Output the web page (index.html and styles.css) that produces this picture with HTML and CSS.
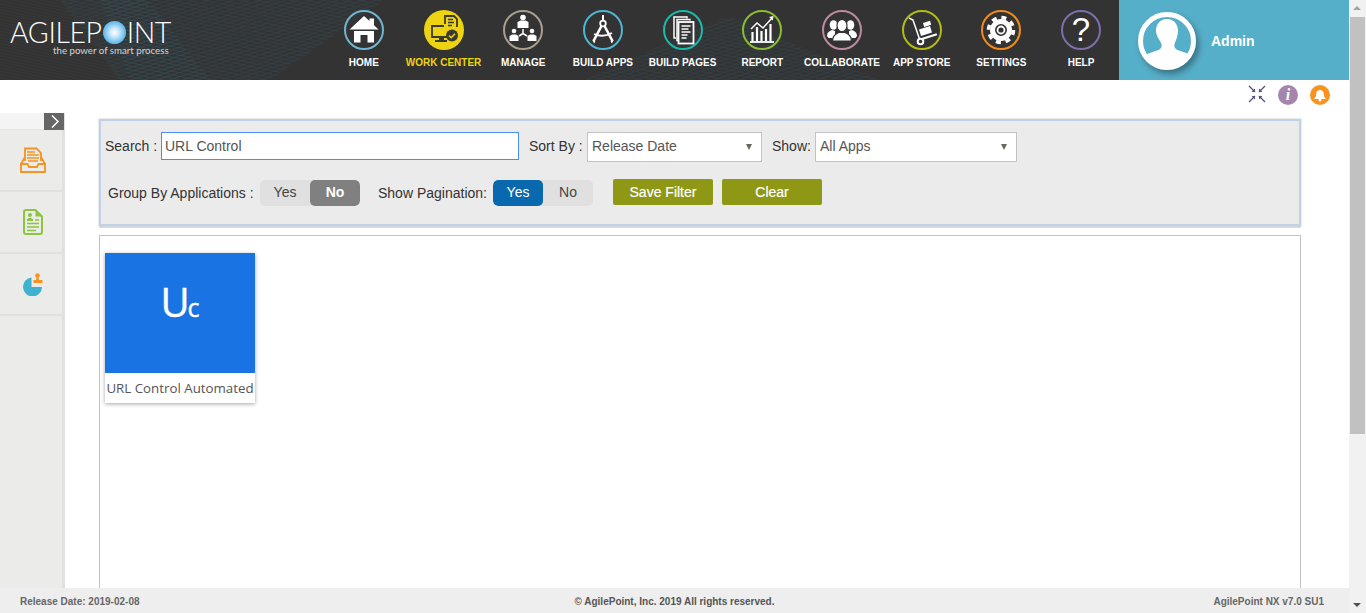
FILE: index.html
```html
<!DOCTYPE html>
<html lang="en">
<head>
<meta charset="utf-8">
<title>AgilePoint NX - Work Center</title>
<link rel="stylesheet" href="styles.css">
</head>
<body>
<div class="page">
  <div class="viewport">
    <header class="topbar">
      <svg class="mesh" width="1119" height="80" viewBox="0 0 1119 80" aria-hidden="true">
        <defs>
          <pattern id="meshA" width="7" height="4" patternUnits="userSpaceOnUse" patternTransform="rotate(-18)">
            <path d="M0 0H7" stroke="#2f6f86" stroke-width=".6"/>
            <path d="M0 0L7 4" stroke="#2f6f86" stroke-width=".35"/>
          </pattern>
          <pattern id="meshB" width="40" height="3" patternUnits="userSpaceOnUse" patternTransform="rotate(12)">
            <path d="M0 0H40" stroke="#3d3d3d" stroke-width=".7"/>
          </pattern>
        </defs>
        <path d="M0 0H150L120 80H0Z" fill="url(#meshB)"/>
        <path d="M100 0H384L270 80H130Z" fill="url(#meshA)" opacity=".55"/>
        <path d="M148 0L210 80H120L60 0Z" fill="url(#meshA)" opacity=".5"/>
        <path d="M585 80L720 19Q740 14 760 30L880 80Z" fill="url(#meshA)" opacity=".5"/>
      </svg>
      <a class="logo">
        <span class="logo-name">AGILEP<span class="logo-dot"></span>INT</span>
        <span class="logo-tag">the power of smart process</span>
      </a>
      <nav class="nav">
        <a class="nav-item">
          <svg class="ico" viewBox="0 0 40 40"><circle cx="20" cy="20" r="19" fill="none" stroke="#6fb6d0" stroke-width="2"/><path fill="#fff" d="M5.500 19.500L20 6l5.500 5V8.500h4.500v6.800l4.500 4.200zM10 21h20v11.500h-6.500V25h-7v7.500H10z"/></svg>
          <span>HOME</span>
        </a>
        <a class="nav-item active">
          <svg class="ico" viewBox="0 0 40 40"><circle cx="20" cy="20" r="20" fill="#edd312"/><g fill="none" stroke="#3a3a32" stroke-width="1.800"><path d="M21 14V6h9l3 3v8"/><path d="M24 9.500h5M24 12.500h6M24 15.500h4" stroke-width="1.400"/><path d="M20 16H8v11h17"/></g><path fill="#3a3a32" d="M15 27h5v3h3v2H11v-2h4z"/><circle cx="28" cy="25.500" r="6" fill="#3a3a32"/><path d="M25 25.500l2.200 2.200 3.800-4" fill="none" stroke="#edd312" stroke-width="1.600"/></svg>
          <span>WORK CENTER</span>
        </a>
        <a class="nav-item">
          <svg class="ico" viewBox="0 0 40 40"><circle cx="20" cy="20" r="19" fill="none" stroke="#a89f8e" stroke-width="2"/><g fill="#fff"><circle cx="20" cy="7.500" r="2.800"/><path d="M14.500 18v-6l3-1.500h5l3 1.500v6z"/><circle cx="11" cy="21" r="2.300"/><path d="M6.500 31v-5l2.500-1.500h4l2.500 1.500v5z"/><circle cx="29" cy="21" r="2.300"/><path d="M24.500 31v-5l2.500-1.500h4l2.500 1.500v5z"/></g><path d="M20 19v4.500M20 23.500l-4 2.500M20 23.500l4 2.500" stroke="#fff" stroke-width="1.500" fill="none"/></svg>
          <span>MANAGE</span>
        </a>
        <a class="nav-item">
          <svg class="ico" viewBox="0 0 40 40"><circle cx="20" cy="20" r="19" fill="none" stroke="#4fb5d5" stroke-width="2"/><g fill="none" stroke="#fff"><path d="M20 5v6" stroke-width="2"/><circle cx="20" cy="13.500" r="2.800" stroke-width="1.800"/><path d="M18.500 16L10.500 31M21.500 16L29.500 31" stroke-width="2.600"/><path d="M11 24q9 4 18-1" stroke-width="1.800"/></g><path fill="#fff" d="M9.500 30l1.500 3.500 1.500-2zM30.500 30l-1.500 3.500-1.500-2z"/></svg>
          <span>BUILD APPS</span>
        </a>
        <a class="nav-item">
          <svg class="ico" viewBox="0 0 40 40"><circle cx="20" cy="20" r="19" fill="none" stroke="#1ab9a9" stroke-width="2"/><g fill="none" stroke="#fff" stroke-width="1.500"><path d="M24 8.500V7H11v21h2"/><path d="M27 10.500V9.500H14v21h2"/><rect x="15.500" y="12" width="15" height="21.500" stroke-width="1.800"/></g><path d="M18.500 16h9M18.500 19h7M18.500 22h9M18.500 25h6M18.500 28h5" stroke="#fff" stroke-width="1.500"/></svg>
          <span>BUILD PAGES</span>
        </a>
        <a class="nav-item">
          <svg class="ico" viewBox="0 0 40 40"><circle cx="20" cy="20" r="19" fill="none" stroke="#8abc36" stroke-width="2"/><path d="M8 32h24" stroke="#fff" stroke-width="1.800"/><path d="M10.500 31V22M15 31V17M19.500 31V21M24 31V19M28.500 31V14" stroke="#fff" stroke-width="2.200"/><path d="M9 19l6-6 6 5 9-10" fill="none" stroke="#fff" stroke-width="1.500"/><path fill="#fff" d="M27 7l4.500-1-.7 4.500z"/></svg>
          <span>REPORT</span>
        </a>
        <a class="nav-item">
          <svg class="ico" viewBox="0 0 40 40"><circle cx="20" cy="20" r="19" fill="none" stroke="#bd8ba0" stroke-width="2"/><g fill="#fff"><ellipse cx="11.500" cy="15" rx="3.800" ry="4.800"/><path d="M5 26c0-4 3-5 5-6l3 1v7H6.500z"/><ellipse cx="28.500" cy="15" rx="3.800" ry="4.800"/><path d="M35 26c0-4-3-5-5-6l-3 1v7h6.500z"/></g><g fill="#fff" stroke="#333" stroke-width="1.200"><ellipse cx="20" cy="15.500" rx="5" ry="6.200"/><path d="M10.500 31c0-6 4-7.500 6.500-8.500h6c2.500 1 6.500 2.500 6.500 8.500z"/></g></svg>
          <span>COLLABORATE</span>
        </a>
        <a class="nav-item">
          <svg class="ico" viewBox="0 0 40 40"><circle cx="20" cy="20" r="19" fill="none" stroke="#b3bc14" stroke-width="2"/><path d="M7 8l4 2L17.500 29" fill="none" stroke="#fff" stroke-width="1.500"/><path fill="#fff" d="M17 19.500l11-3.500 2 6.500-11 3.500zM21 13l7-2.200 1.200 4-7 2.200zM19.500 28l15-4.800.7 2-15 4.800z"/><circle cx="18.500" cy="31.500" r="2.800" fill="none" stroke="#fff" stroke-width="2"/></svg>
          <span>APP STORE</span>
        </a>
        <a class="nav-item">
          <svg class="ico" viewBox="0 0 40 40"><circle cx="20" cy="20" r="19" fill="none" stroke="#f08b1d" stroke-width="2"/><circle cx="20" cy="20" r="12.500" fill="none" stroke="#fff" stroke-width="3.500" stroke-dasharray="5 4.820"/><circle cx="20" cy="20" r="8.500" fill="none" stroke="#fff" stroke-width="5"/><circle cx="20" cy="20" r="3.500" fill="none" stroke="#fff" stroke-width="1.800"/></svg>
          <span>SETTINGS</span>
        </a>
        <a class="nav-item">
          <span class="ico help-ico">?</span>
          <span>HELP</span>
        </a>
      </nav>
      <div class="profile">
        <span class="avatar">
          <svg viewBox="0 0 58 58" width="58" height="58"><circle cx="29" cy="29" r="26.500" fill="#56afc9" stroke="#fff" stroke-width="5"/><path fill="#fff" d="M29 7c7 0 11 5 11 12 0 5-2 9-3.500 13-.6 3 .5 5 3 6l10 3.500c1.500.6 2.500 1.500 3 3A24.500 24.500 0 0 1 29 53 24.500 24.500 0 0 1 7.500 44.500c.5-1.500 1.500-2.400 3-3l10-3.500c2.500-1 3.600-3 3-6C22 28 18 24 18 19c0-7 4-12 11-12z"/></svg>
        </span>
        <span class="profile-name">Admin</span>
      </div>
    </header>

    <div class="workspace">
      <aside class="sidebar">
        <div class="side-top"><button class="side-toggle" type="button"><svg viewBox="0 0 20 17" width="20" height="17"><path d="M8 2.500l6 6-6 6" fill="none" stroke="#fff" stroke-width="1.500"/></svg></button></div>
        <div class="side-item">
          <svg viewBox="0 0 26 26" width="26" height="26"><path d="M5 14V1.500h11.500L21 6v8" fill="none" stroke="#f7931e" stroke-width="1.800"/><path d="M7 5h8M7 8h12M7 11h12M8 14h10" stroke="#f7931e" stroke-width="1.700"/><path d="M5 10L1 17h5M21 10l4 7h-5" fill="none" stroke="#f7931e" stroke-width="1.800"/><path d="M1 17h6.500l1.500 3h8l1.500-3H25v8H1z" fill="none" stroke="#f7931e" stroke-width="1.800"/></svg>
        </div>
        <div class="side-item">
          <svg viewBox="0 0 20 26" width="20" height="26"><path d="M3 1h9.500L19 7.500V23q0 2-2 2H3q-2 0-2-2V3q0-2 2-2z" fill="none" stroke="#8cc63f" stroke-width="2"/><circle cx="7" cy="6" r="2" fill="#8cc63f"/><path d="M4 12V10l2-1h2l2 1v2zM12.500 2v5.500h6" fill="#8cc63f"/><path d="M4 14.500h12M4 18h12M4 21.500h9M12 11h4" stroke="#8cc63f" stroke-width="1.700"/></svg>
        </div>
        <div class="side-item">
          <svg viewBox="0 0 20 23" width="20" height="23"><path fill="#3fb2d2" d="M8.500 4.500v9.500H19a9.500 9.500 0 1 1-10.500-9.500z"/><circle cx="14.500" cy="2.500" r="2.300" fill="#f7931e"/><path fill="#f7931e" d="M13.500 4.500h2l.5 2.500h3.500v3h-9V7h2.500z"/></svg>
        </div>
        <div class="side-rest"></div>
      </aside>
      <main class="main">
        <div class="tools">
          <svg viewBox="0 0 18 18" width="18" height="18"><path d="M1 1l5.500 5.500M17 1l-5.500 5.500M1 17l5.500-5.500M17 17l-5.500-5.500" fill="none" stroke="#56507a" stroke-width="1.300"/><path fill="#56507a" d="M7.300 7.300L3.600 6.800l3.200-3.200zM10.700 7.300l3.700-.5-3.200-3.200zM7.300 10.700l-3.700.5 3.200 3.200zM10.700 10.700l3.700.5-3.200 3.200z"/></svg>
          <span class="tool-info">i</span>
          <span class="tool-bell"><svg viewBox="0 0 20 20" width="20" height="20"><path fill="#fff" d="M10 5c2.400 0 3.800 1.900 3.800 4.200 0 2.200.7 3 1.700 4v.8H4.500v-.8c1-1 1.700-1.800 1.700-4C6.200 6.900 7.600 5 10 5z"/><circle cx="10" cy="15" r="1.500" fill="#fff"/></svg></span>
        </div>
        <section class="filter">
          <div class="filter-row">
            <label class="lbl lbl-search">Search :</label>
            <input class="search" type="text" value="URL Control">
            <label class="lbl lbl-sort">Sort By :</label>
            <div class="select select-sort">Release Date<i class="caret"></i></div>
            <label class="lbl lbl-show">Show:</label>
            <div class="select select-show">All Apps<i class="caret"></i></div>
          </div>
          <div class="filter-row second">
            <span class="lbl lbl-group">Group By Applications :</span>
            <div class="toggle"><span class="opt">Yes</span><span class="opt on-gray">No</span></div>
            <span class="lbl lbl-page">Show Pagination:</span>
            <div class="toggle"><span class="opt on-blue">Yes</span><span class="opt">No</span></div>
            <button class="btn btn-save" type="button">Save Filter</button>
            <button class="btn btn-clear" type="button">Clear</button>
          </div>
        </section>
        <section class="results">
          <article class="card">
            <div class="card-tile"><span class="tile-big">U</span><span class="tile-small">c</span></div>
            <div class="card-name">URL Control Automated</div>
          </article>
        </section>
      </main>
    </div>

    <footer class="footer">
      <span>Release Date: 2019-02-08</span>
      <span class="foot-mid">© AgilePoint, Inc. 2019 All rights reserved.</span>
      <span class="foot-right">AgilePoint NX v7.0 SU1</span>
    </footer>
  </div>
  <div class="scrollbar">
    <i class="arrow up"></i>
    <div class="thumb"></div>
    <div class="track"></div>
    <i class="arrow down"></i>
  </div>
</div>
</body>
</html>
```

FILE: styles.css
```css
* { box-sizing: border-box; }
html, body { margin: 0; height: 100%; overflow: hidden; }
body { font-family: "Liberation Sans", Arial, sans-serif; font-size: 14px; color: #333; background: #fff; }

.page { display: flex; height: 613px; }
.viewport { flex: 1; min-width: 0; display: flex; flex-direction: column; }

/* top bar */
.topbar { position: relative; height: 80px; flex: none; display: flex; background: #333; overflow: hidden; }
.mesh { position: absolute; left: 0; top: 0; }
.logo { position: relative; width: 324px; flex: none; padding: 19px 0 0 10px; display: flex; flex-direction: column; color: #fff; }
.logo-name { font-family: Lato, sans-serif; font-weight: 300; font-size: 28.500px; line-height: 26px; letter-spacing: -.4px; display: flex; align-items: center; white-space: nowrap; }
.logo-dot { width: 23px; height: 23px; border-radius: 50%; margin: 0 1px; background: radial-gradient(circle at 50% 50%, #fff 0, #cfeafb 25%, #4db1ea 75%, #1f8fd8 100%); }
.logo-tag { font-family: Lato, sans-serif; font-size: 9.700px; line-height: 12px; margin: -1px 0 0 43px; color: #d5d5d5; white-space: nowrap; }
.nav { position: relative; display: flex; width: 795px; flex: none; }
.nav-item { width: 79.700px; flex: none; display: flex; flex-direction: column; align-items: center; padding-top: 10px; color: #fff; font-size: 10px; font-weight: 700; line-height: 12px; white-space: nowrap; }
.nav-item span:last-child { margin-top: 7px; }
.nav-item.active { color: #edd312; }
.ico { width: 40px; height: 40px; display: block; flex: none; }
.help-ico { border: 2px solid #7d6fa8; border-radius: 50%; font-size: 33px; font-weight: 400; line-height: 36px; text-align: center; color: #fff; }
.profile { position: relative; flex: 1; background: #56afc9; display: flex; align-items: center; padding-left: 19px; }
.avatar { width: 58px; height: 58px; border-radius: 50%; box-shadow: 3px 4px 6px rgba(0,0,0,.35); margin: 1px 15px 0 0; }
.avatar svg { display: block; }
.profile-name { color: #fff; font-size: 14px; font-weight: 700; margin-top: 2px; }

/* workspace */
.workspace { flex: 1; min-height: 0; display: flex; overflow: hidden; }
.sidebar { width: 65px; flex: none; margin-top: 33px; display: flex; flex-direction: column; background: #e0e0e0; padding-right: 3px; }
.side-top { height: 17px; flex: none; background: #f4f4f4; border-bottom: 1px solid #e4e4e4; position: relative; }
.side-toggle { position: absolute; left: 44px; top: 0; width: 20px; height: 17px; padding: 0; border: 0; background: #666; display: block; }
.side-toggle svg { display: block; }
.side-item { height: 62px; flex: none; background: #ebebea; border-bottom: 2px solid #e0e0e0; display: flex; align-items: center; justify-content: center; padding-left: 3px; }
.side-rest { flex: 1; background: #ebebea; }

.main { flex: 1; min-width: 0; padding: 0 48px 0 34px; }
.tools { height: 39px; display: flex; align-items: flex-start; justify-content: flex-end; gap: 12px; padding: 5px 0 0; margin-right: -29px; }
.tool-info, .tool-bell { width: 20px; height: 20px; border-radius: 50%; display: block; }
.tool-info { background: #a585ac; color: #fff; font: italic 700 16px/20px "Liberation Serif", serif; text-align: center; }
.tool-bell { background: #f7931e; }
.tool-bell svg { display: block; }

.filter { height: 107px; border: 2px solid #bfd2e8; background: #ebebeb; padding: 11px 0 0 4px; box-shadow: 0 0 2px #c4c4c4, 0 2px 0 #dcdcdc; }
.filter-row { display: flex; align-items: center; height: 29px; }
.filter-row.second { margin-top: 18px; height: 27px; }
.lbl { white-space: nowrap; color: #333; }
.lbl-search { width: 56px; margin-bottom: 2px; }
.search { width: 358px; height: 28px; margin: 0 0 1px; border: 1px solid #4a8df6; padding: 0 3px; font: inherit; color: #555; background: #fff; outline: 0; }
.lbl-sort { width: 58px; margin: 0 0 2px 10px; }
.select { position: relative; height: 30px; border: 1px solid #c2c2c2; background: #fff; color: #555; padding: 0 4px; line-height: 27px; }
.select-sort { width: 175px; }
.lbl-show { width: 43px; margin: 0 0 2px 10px; }
.select-show { width: 202px; }
.caret { position: absolute; right: 9px; top: 11px; width: 0; height: 0; border: 3.500px solid transparent; border-top: 6px solid #6b6560; border-bottom: 0; }
.lbl-group { margin-left: 3px; width: 152px; }
.toggle { display: flex; width: 100px; height: 26px; margin-top: 1px; border-radius: 5px; background: #e0e0e0; overflow: hidden; }
.opt { width: 50px; text-align: center; line-height: 24px; color: #444; }
.on-gray { background: #808080; color: #fff; font-weight: 700; border-radius: 5px; }
.on-blue { background: #0a69ae; color: #fff; border-radius: 5px; }
.lbl-page { margin-left: 18px; width: 115px; }
.btn { height: 26px; width: 100px; border: 0; border-radius: 2px; background: #8e9815; color: #fff; font: inherit; font-size: 14px; padding: 0; margin-bottom: 1px; -webkit-text-stroke: .2px #fff; }
.btn-save { margin-left: 20px; }
.btn-clear { margin-left: 9px; }

.results { height: 400px; margin-top: 9px; border: 1px solid #c4c4c4; padding: 17px 0 0 5px; }
.card { width: 150px; height: 150px; background: #fff; box-shadow: 0 1px 4px rgba(0,0,0,.35); }
.card-tile { height: 120px; background: #1a73e3; color: #fff; font-family: "Open Sans", sans-serif; display: flex; align-items: baseline; justify-content: center; padding-top: 24px; -webkit-text-stroke: .4px #fff; }
.tile-big { font-size: 40px; line-height: 50px; letter-spacing: -2px; }
.tile-small { font-size: 25px; line-height: 50px; }
.card-name { font-family: "Open Sans", sans-serif; font-size: 13.300px; line-height: 30px; text-align: center; color: #555; white-space: nowrap; }

/* footer */
.footer { height: 25px; flex: none; background: #eee; display: grid; grid-template-columns: 1fr auto 1fr; align-items: center; padding: 1px 25px 0 20px; color: #666; font-size: 10px; font-weight: 700; }
.foot-mid { color: #555; margin-left: 5px; }
.foot-right { text-align: right; }

/* scrollbar */
.scrollbar { width: 17px; flex: none; background: #f1f1f1; display: flex; flex-direction: column; align-items: center; }
.arrow { height: 17px; width: 17px; flex: none; display: block; position: relative; }
.arrow::after { content: ""; position: absolute; left: 4px; border-left: 4px solid transparent; border-right: 4px solid transparent; }
.arrow.up::after { top: 6px; border-bottom: 4px solid #a3a3a3; }
.arrow.down::after { top: 7px; border-top: 4px solid #505050; }
.thumb { width: 15px; height: 417px; flex: none; background: #c1c1c1; }
.track { flex: 1; }
```
